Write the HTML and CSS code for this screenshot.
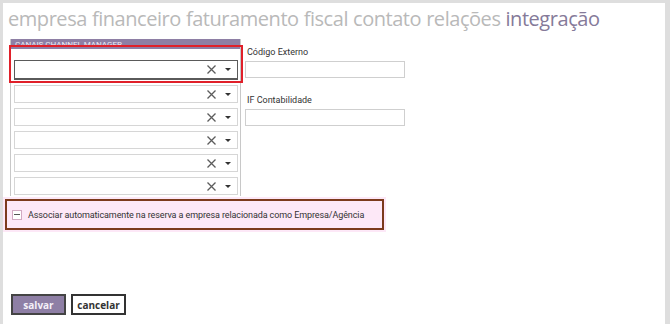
FILE: index.html
```html
<!DOCTYPE html>
<html lang="pt">
<head>
  <meta charset="UTF-8">
  <meta name="viewport" content="width=device-width, initial-scale=1.0">
  <title>Integração</title>
  <link rel="stylesheet" href="styles.css">
</head>
<body>
  <div class="window">
    <nav class="tabs">
      <span class="tab">empresa</span>
      <span class="tab">financeiro</span>
      <span class="tab">faturamento</span>
      <span class="tab">fiscal</span>
      <span class="tab">contato</span>
      <span class="tab">relações</span>
      <span class="tab active">integração</span>
    </nav>

    <div class="content">
      <div class="channels">
        <div class="channels-header">CANAIS CHANNEL MANAGER</div>
        <div class="channels-list">
          <div class="combo focused">
            <svg class="clear" width="9" height="9" viewBox="0 0 9 9"><path d="M0.5 0.5L8.5 8.5M8.5 0.5L0.5 8.5"/></svg>
            <span class="caret"></span>
          </div>
          <div class="combo">
            <svg class="clear" width="9" height="9" viewBox="0 0 9 9"><path d="M0.5 0.5L8.5 8.5M8.5 0.5L0.5 8.5"/></svg>
            <span class="caret"></span>
          </div>
          <div class="combo">
            <svg class="clear" width="9" height="9" viewBox="0 0 9 9"><path d="M0.5 0.5L8.5 8.5M8.5 0.5L0.5 8.5"/></svg>
            <span class="caret"></span>
          </div>
          <div class="combo">
            <svg class="clear" width="9" height="9" viewBox="0 0 9 9"><path d="M0.5 0.5L8.5 8.5M8.5 0.5L0.5 8.5"/></svg>
            <span class="caret"></span>
          </div>
          <div class="combo">
            <svg class="clear" width="9" height="9" viewBox="0 0 9 9"><path d="M0.5 0.5L8.5 8.5M8.5 0.5L0.5 8.5"/></svg>
            <span class="caret"></span>
          </div>
          <div class="combo">
            <svg class="clear" width="9" height="9" viewBox="0 0 9 9"><path d="M0.5 0.5L8.5 8.5M8.5 0.5L0.5 8.5"/></svg>
            <span class="caret"></span>
          </div>
        </div>
        <div class="highlight"></div>
      </div>

      <div class="fields">
        <label class="field">
          <span class="field-label">Código Externo</span>
          <input type="text" class="field-input">
        </label>
        <label class="field">
          <span class="field-label">IF Contabilidade</span>
          <input type="text" class="field-input">
        </label>
      </div>
    </div>

    <div class="auto-assoc">
      <span class="checkbox"><span class="dash"></span></span>
      <span class="auto-text">Associar automaticamente na reserva a empresa relacionada como Empresa/Agência</span>
    </div>

    <div class="actions">
      <button class="btn primary">salvar</button>
      <button class="btn">cancelar</button>
    </div>
  </div>
</body>
</html>
```

FILE: styles.css
```css
body {
  margin: 0;
  background-color: #dedede;
  font-family: "Open Sans", "Noto Sans", sans-serif;
  color: #333;
}

.window {
  margin: 3px 5px 0 3px;
  height: 321px;
  background-color: white;
  display: flex;
  flex-direction: column;
}

.tabs {
  padding: 3px 0 0 5px;
  height: 33px;
  display: flex;
  gap: 5px;
  font-size: 20px;
  line-height: 26px;
  color: #b9b9b9;
  letter-spacing: -0.45px;
}

.tab.active {
  color: #857a99;
}

.content {
  display: flex;
  gap: 4px;
  padding-left: 7px;
}

.channels {
  position: relative;
  width: 229px;
  height: 157px;
  border-left: 1px solid #c8c8c8;
  border-right: 1px solid #c8c8c8;
}

.channels-header {
  height: 10px;
  background-color: #8e7fa5;
  color: #f0ecf5;
  font-family: Roboto, sans-serif;
  font-size: 8px;
  line-height: 11px;
  padding-left: 4px;
  white-space: nowrap;
}

.channels-list {
  padding: 12px 2px 0 3px;
  display: flex;
  flex-direction: column;
  gap: 5px;
}

.combo {
  height: 16px;
  border: 1px solid #d6d6d6;
  display: flex;
  align-items: center;
  justify-content: flex-end;
  padding-right: 6px;
  gap: 9px;
}

.combo.focused {
  border-color: #5a5a5a;
  height: 17px;
  margin-top: -1px;
  border-bottom-width: 2px;
}

.clear {
  stroke: #5c5c5c;
  stroke-width: 1.3;
  fill: none;
}

.caret {
  width: 0;
  height: 0;
  border-left: 3px solid transparent;
  border-right: 3px solid transparent;
  border-top: 3px solid #333;
}

.highlight {
  position: absolute;
  border: 2px solid #e0202a;
  left: -2px;
  top: 6px;
  width: 230px;
  height: 34px;
}

.fields {
  display: flex;
  flex-direction: column;
  gap: 15px;
  padding-top: 6px;
}

.field {
  display: flex;
  flex-direction: column;
  gap: 2px;
}

.field-label {
  font-family: Roboto, sans-serif;
  font-size: 9px;
  line-height: 14px;
  padding-left: 2px;
  color: #333;
}

.field-input {
  width: 158px;
  height: 15px;
  margin: 0;
  padding: 0;
  border: 1px solid #cfcfcf;
}

.auto-assoc {
  box-sizing: border-box;
  margin: 3px 0 0 2px;
  width: 379px;
  height: 31px;
  background-color: #fde8f7;
  box-shadow: inset 0 0 0 2px #7c3a1c, 0 0 0 2px #fde8f7;
  display: flex;
  align-items: center;
  padding-left: 7px;
}

.checkbox {
  box-sizing: border-box;
  width: 10px;
  height: 10px;
  border: 1px solid #d2a9c2;
  background-color: white;
  display: flex;
  align-items: center;
  justify-content: center;
}

.dash {
  width: 6px;
  height: 1px;
  background-color: #555;
}

.auto-text {
  margin-left: 6px;
  font-family: Roboto, sans-serif;
  font-size: 9px;
  letter-spacing: -0.1px;
  white-space: nowrap;
  color: #333;
}

.actions {
  margin-top: auto;
  margin-bottom: 9px;
  padding-left: 8px;
  display: flex;
  gap: 5px;
}

.btn {
  height: 21px;
  width: 55px;
  padding: 0;
  background-color: white;
  border: 2px solid #333;
  font-family: "Open Sans", sans-serif;
  font-size: 10px;
  font-weight: bold;
  color: #333;
}

.btn.primary {
  background-color: #8e7fa5;
  color: #f4f0f8;
  border-color: #444;
}
```
